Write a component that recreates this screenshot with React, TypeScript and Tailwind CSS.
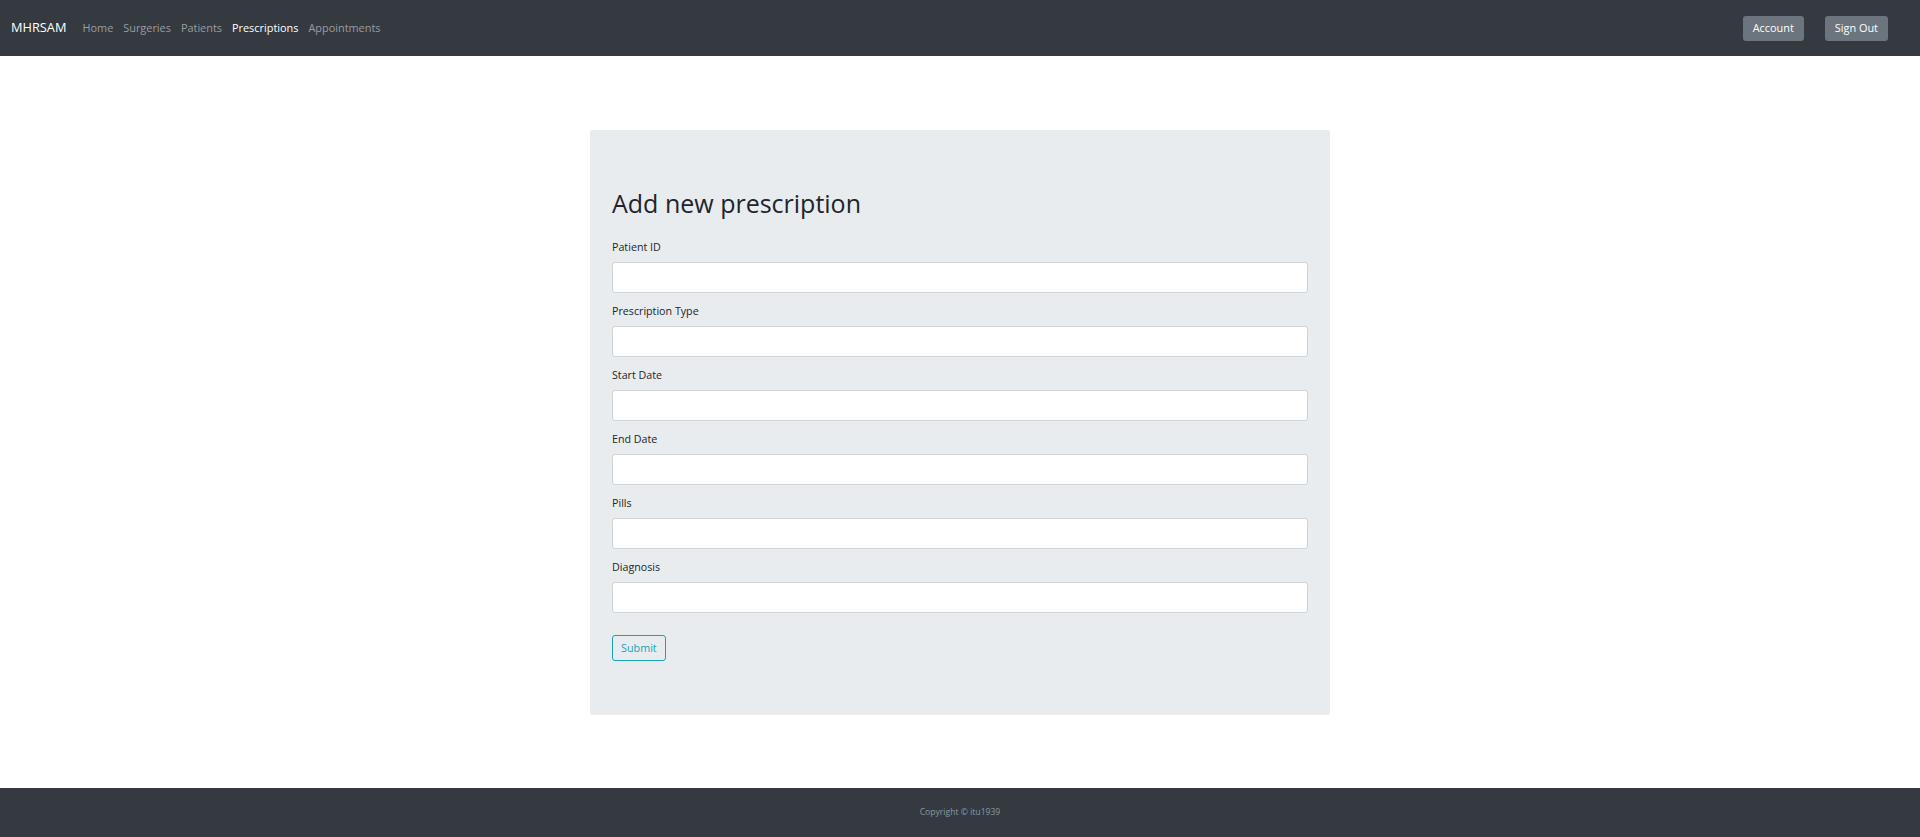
const fields = ["Patient ID", "Prescription Type", "Start Date", "End Date", "Pills", "Diagnosis"];

const links = [
  { label: "Home", active: false },
  { label: "Surgeries", active: false },
  { label: "Patients", active: false },
  { label: "Prescriptions", active: true },
  { label: "Appointments", active: false },
];

export default function App() {
  return (
    <div className="flex h-screen flex-col bg-white font-['Open_Sans',sans-serif] text-[#212529]">
      {/* Navbar */}
      <nav className="flex h-[56px] shrink-0 items-center bg-[#343a40] pl-[11px] pr-[32px]">
        <span className="mr-[16px] text-[12.8px] text-white">MHRSAM</span>
        <div className="flex items-center gap-[10px]">
          {links.map((l) => (
            <a
              key={l.label}
              href="#"
              className={`text-[10.9px] ${l.active ? "text-white" : "text-[#9a9da0]"}`}
            >
              {l.label}
            </a>
          ))}
        </div>
        <div className="ml-auto flex items-center gap-[21px]">
          <button className="h-[25px] rounded-[3px] bg-[#6c757d] px-[10px] text-[10.9px] text-white">
            Account
          </button>
          <button className="h-[25px] rounded-[3px] bg-[#6c757d] px-[10px] text-[10.9px] text-white">
            Sign Out
          </button>
        </div>
      </nav>

      {/* Main */}
      <main className="flex flex-1 justify-center">
        <div className="mt-[74px] h-fit w-[740px] rounded-[3px] bg-[#e9ecef] px-[22px] pt-[56px] pb-[54px]">
          <h1 className="mb-[20px] text-[25px] leading-[34px] font-normal">Add new prescription</h1>
          <form onSubmit={(e) => e.preventDefault()}>
            {fields.map((f) => (
              <div key={f} className="mb-[11px]">
                <label className="mb-[7px] block text-[10.7px] leading-[15px]">{f}</label>
                <input
                  type="text"
                  className="block h-[31px] w-full rounded-[3px] border border-[#ced4da] bg-white px-[8px] text-[10.6px] outline-none"
                />
              </div>
            ))}
            <button
              type="submit"
              className="mt-[22px] block h-[26px] rounded-[3px] border border-[#17a2b8] bg-transparent px-[8px] text-[10.8px] text-[#17a2b8]"
            >
              Submit
            </button>
          </form>
        </div>
      </main>

      {/* Footer */}
      <footer className="flex h-[49px] shrink-0 items-center justify-center bg-[#343a40]">
        <span className="text-[8.6px] text-[#8a97a3]">Copyright © itu1939</span>
      </footer>
    </div>
  );
}
